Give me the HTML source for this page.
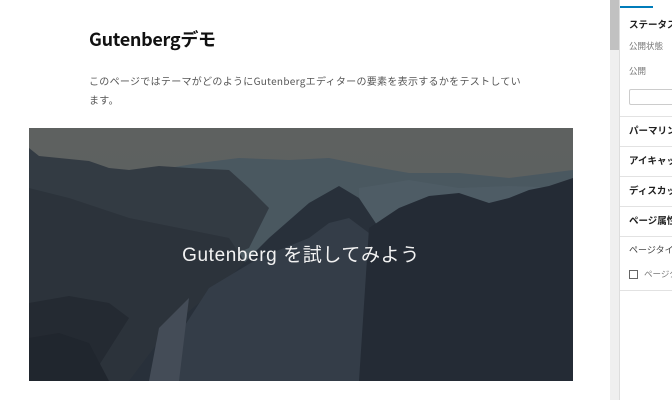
<!DOCTYPE html>
<html><head><meta charset="utf-8"><style>
*{margin:0;padding:0;box-sizing:border-box}
body{width:672px;height:400px;overflow:hidden;background:#fff;font-family:"Liberation Sans","Noto Sans CJK JP",sans-serif;position:relative}
.a{position:absolute;white-space:nowrap}
h1{position:absolute;left:89px;top:26px;font-size:18px;font-weight:bold;color:#111;font-family:"Noto Sans CJK JP",sans-serif;letter-spacing:-0.3px}
.p{left:89px;font-size:10px;color:#555;font-family:"Noto Sans CJK JP",sans-serif;letter-spacing:0.3px}
.cover{position:absolute;left:29px;top:128px;width:544px;height:253px;overflow:hidden;background:#5c605f}
.sb{position:absolute;left:610px;top:0;width:9px;height:400px;background:#efefef}
.th{position:absolute;left:610px;top:0;width:9px;height:50px;background:#c1c1c1}
.side{position:absolute;left:619px;top:0;width:53px;height:400px;border-left:1px solid #ddd;background:#fff}
.hd{left:629px;font-size:9.5px;font-weight:bold;color:#1e1e1e;font-family:"Noto Sans CJK JP",sans-serif}
.lt{left:629px;font-size:8.5px;color:#777;font-family:"Noto Sans CJK JP",sans-serif}
.ln{position:absolute;left:620px;width:52px;height:1px;background:#e2e2e2}
</style></head><body>
<h1>Gutenbergデモ</h1>
<div class="a p" style="top:73px">このページではテーマがどのようにGutenbergエディターの要素を表示するかをテストしてい</div>
<div class="a p" style="top:92px">ます。</div>
<div class="cover">
<svg width="544" height="253" viewBox="0 0 544 253">
<defs><linearGradient id="s" x1="0" y1="0" x2="0" y2="1"><stop offset="0" stop-color="#5e6160"/><stop offset="1" stop-color="#586062"/></linearGradient></defs>
<rect width="544" height="253" fill="url(#s)"/>
<polygon points="140,40 170,35 210,30 260,32 300,30 340,38 380,45 430,45 480,50 544,42 544,253 140,253" fill="#4a5860"/>
<polygon points="330,60 380,52 430,60 480,58 544,60 544,253 330,253" fill="#4e5c65"/>
<polygon points="0,20 10,28 30,30 60,33 80,40 100,42 130,38 160,40 200,42 220,60 240,80 220,120 150,150 80,180 0,175" fill="#333b43"/>
<polygon points="0,60 40,70 100,90 150,100 200,110 220,140 200,253 0,253" fill="#2c333b"/>
<polygon points="0,175 40,168 80,175 100,190 60,253 0,253" fill="#242a32"/>
<polygon points="140,200 200,150 240,110 280,75 310,58 330,70 350,100 330,253 100,253" fill="#28303a"/>
<polygon points="180,160 230,130 280,110 300,95 320,90 340,105 360,130 380,160 380,253 120,253" fill="#343d48"/>
<polygon points="340,100 370,80 400,68 430,65 460,75 480,70 500,62 520,58 544,50 544,253 330,253" fill="#242b35"/>
<polygon points="120,253 130,200 160,170 150,253" fill="#444c57"/>
<polygon points="0,210 30,205 60,215 80,253 0,253" fill="#20262e"/>
<text x="272" y="133" text-anchor="middle" fill="#f2f2f2" font-size="19" font-family="Liberation Sans,Noto Sans CJK JP,sans-serif" letter-spacing="0.6">Gutenberg を試してみよう</text>
</svg></div>
<div class="sb"></div><div class="th"></div>
<div class="side"></div>
<div class="a" style="left:620px;top:6px;width:33px;height:2px;background:#007cba"></div>
<div class="a hd" style="top:17px">ステータスと</div>
<div class="a lt" style="top:40px">公開状態</div>
<div class="a lt" style="top:65px">公開</div>
<div class="a" style="left:629px;top:89px;width:50px;height:16px;border:1px solid #ccc;border-radius:2px"></div>
<div class="ln" style="top:116px"></div>
<div class="a hd" style="top:123px">パーマリンク</div>
<div class="ln" style="top:146px"></div>
<div class="a hd" style="top:153px">アイキャッチ</div>
<div class="ln" style="top:176px"></div>
<div class="a hd" style="top:183px">ディスカッシ</div>
<div class="ln" style="top:206px"></div>
<div class="a hd" style="top:213px">ページ属性</div>
<div class="ln" style="top:236px"></div>
<div class="a" style="left:629px;top:243px;font-size:9px;color:#444;font-family:'Noto Sans CJK JP',sans-serif">ページタイ</div>
<div class="a" style="left:629px;top:270px;width:9px;height:9px;border:1px solid #666"></div>
<div class="a lt" style="left:644px;top:268px">ページタ</div>
<div class="ln" style="top:290px"></div>
</body></html>
